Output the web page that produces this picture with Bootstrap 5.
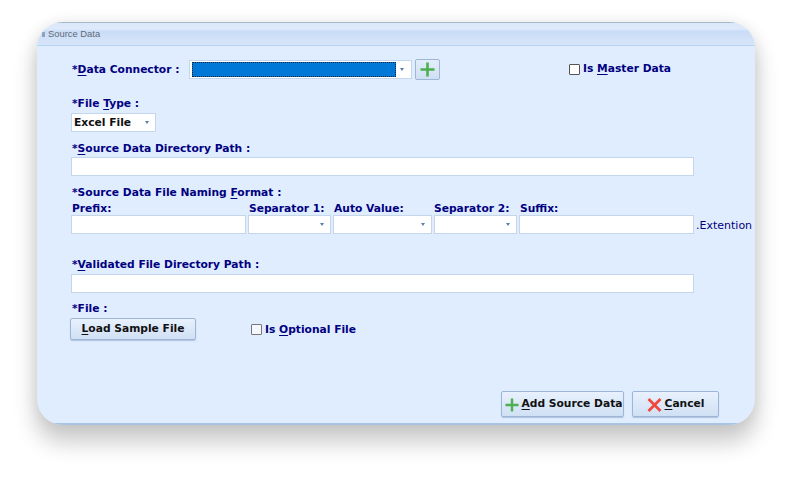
<!DOCTYPE html>
<html lang="en">
<head>
<meta charset="utf-8">
<title>Source Data</title>
<link href="https://cdn.jsdelivr.net/npm/bootstrap@5.3.0/dist/css/bootstrap.min.css" rel="stylesheet">
<style>
html,body{height:100%;background:#fff;margin:0;overflow:hidden}
body{padding:22px 37px 53px;font-family:"DejaVu Sans","Liberation Sans",sans-serif}
.dlg{width:718px;height:403px;border-radius:26px;background:#e0edfe;overflow:hidden;box-shadow:0 16px 22px 2px rgba(0,0,0,.2),0 0 16px rgba(0,0,0,.08);display:flex;flex-direction:column}
.dlg-head{height:24px;flex:none;background:linear-gradient(#dbe8fa 0,#dfebfc 6px,#c9dcf6 8px,#d8e6fa 23px);border-top:1px solid #a9b7c9;border-bottom:1px solid #b6d4f3;color:#5f6a79;padding:4px 0 0 5px;line-height:14px;white-space:nowrap;font-family:"Liberation Sans",sans-serif;font-size:9.4px;display:flex;align-items:flex-start;gap:3px}
.tick{width:3px;height:5px;background:#8ea3bd;margin-top:5px;flex:none}
.dlg-body{flex:1;padding:0 0 0 34px;position:relative;display:flex;flex-direction:column;border-bottom:2px solid #a9c3e2}
.lbl{font-size:10.7px;font-weight:700;color:#000080;line-height:14px;white-space:nowrap;margin:0}
p.lbl,.first{padding-left:1px}
.lbl u{text-underline-offset:2px}
.fld{height:19px;background:#fff;border:1px solid #c4d6ec;display:flex;align-items:center;justify-content:flex-end;flex:none}
.wide{width:623px}
.caret{width:0;height:0;border-left:2.5px solid transparent;border-right:2.5px solid transparent;border-top:3px solid #5b7ea8;margin-right:6px}
.conn{width:223px;padding:1px}
.conn-sel{flex:1;height:15px;background:#0078d7;outline:1px dotted #123;outline-offset:-1px;margin-left:1px;margin-right:4px}
.plus{width:25px;height:21px;padding:0;border:1px solid #9db6d6;border-radius:2px;background:linear-gradient(#e3eefc,#cfdff3);display:flex;align-items:center;justify-content:center;margin-left:3px}
.chk{width:11px;height:11px;border:1px solid #555;background:#fff;border-radius:1px;flex:none}
.chk-soft{border-color:#777;background:#f4f7fb}
.winbtn{height:22px;padding:0;border:1px solid #9db6d6;border-radius:2px;background:linear-gradient(#e8f1fd,#d0e0f4);color:#111;font-size:10.7px;font-weight:700;line-height:1;box-shadow:0 1px 1px rgba(90,120,160,.35);display:flex;align-items:center;justify-content:center;gap:3px;white-space:nowrap}
.winbtn u{text-underline-offset:2px}
.typ{width:85px;font-size:10.7px;font-weight:700;color:#111;justify-content:space-between;padding-left:2px}
.typ span:first-child{padding-top:1px}
.ext{font-size:11px;color:#000080;line-height:14px;white-space:nowrap;margin-top:2px}
.cols{gap:2px}
.c1{width:175px}.c2{width:83px}.c3{width:99px}.c4{width:83px}.c5{width:175px}
.cap{display:block;padding-left:1px}
.cap-sep2{margin-left:-1px;width:84px}
.r1{height:21px;margin-top:13px}
.r2{margin-top:17px}
.r3{margin-top:2px}
.r4{margin-top:10px}
.r5{margin-top:1px}
.r6{margin-top:10px}
.r7{margin-top:2px;height:14px}
.r8{margin-top:-1px}
.r9{margin-top:24px}
.r10{margin-top:2px}
.r11{margin-top:9px}
.r12{margin-top:2px}
.chkm{position:absolute;left:532px;top:16px;gap:3px}
.optl{margin-left:55px;margin-top:1px;gap:3px}
.foot{position:absolute;left:464px;top:345px;gap:8px}
.b-add{width:123px;height:26px;padding-left:2px;padding-top:1px}
.b-can{width:87px;height:26px;padding-top:1px}
</style>
</head>
<body>
<div class="dlg">
  <div class="dlg-head"><span class="tick"></span><span>Source Data</span></div>
  <div class="dlg-body">
    <div class="d-flex align-items-center r1">
      <span class="lbl first" style="width:118px">*<u>D</u>ata Connector :</span>
      <div class="fld conn"><div class="conn-sel"></div><span class="caret"></span></div>
      <button type="button" class="plus" aria-label="Add connector">
        <svg width="15" height="15" viewBox="0 0 15 15"><path d="M6.2 0.5h2.6v5.7h5.7v2.6H8.8v5.7H6.2V8.8H0.5V6.2h5.7z" fill="#4caf50"/></svg>
      </button>
    </div>
    <div class="d-flex align-items-center chkm">
      <span class="chk"></span><span class="lbl">Is <u>M</u>aster Data</span>
    </div>
    <p class="lbl r2">*File <u>T</u>ype :</p>
    <div class="fld typ r3"><span>Excel File</span><span class="caret"></span></div>
    <p class="lbl r4">*<u>S</u>ource Data Directory Path :</p>
    <div class="fld wide r5"></div>
    <p class="lbl r6">*Source Data File Naming <u>F</u>ormat :</p>
    <div class="d-flex cols r7">
      <span class="lbl cap c1">Prefix:</span>
      <span class="lbl cap c2">Separator 1:</span>
      <span class="lbl cap c3">Auto Value:</span>
      <span class="lbl cap cap-sep2">Separator 2:</span>
      <span class="lbl cap c5">Suffix:</span>
    </div>
    <div class="d-flex cols align-items-center r8">
      <div class="fld c1"></div>
      <div class="fld c2"><span class="caret"></span></div>
      <div class="fld c3"><span class="caret"></span></div>
      <div class="fld c4"><span class="caret"></span></div>
      <div class="fld c5"></div>
      <span class="ext">.Extention</span>
    </div>
    <p class="lbl r9">*<u>V</u>alidated File Directory Path :</p>
    <div class="fld wide r10"></div>
    <p class="lbl r11">*File :</p>
    <div class="d-flex align-items-center r12">
      <button type="button" class="winbtn" style="width:126px;margin-left:-1px"><span><u>L</u>oad Sample File</span></button>
      <div class="d-flex align-items-center optl">
        <span class="chk chk-soft"></span><span class="lbl">Is <u>O</u>ptional File</span>
      </div>
    </div>
    <div class="d-flex foot">
      <button type="button" class="winbtn b-add">
        <svg width="14" height="14" viewBox="0 0 15 15"><path d="M6.2 0.5h2.6v5.7h5.7v2.6H8.8v5.7H6.2V8.8H0.5V6.2h5.7z" fill="#4caf50"/></svg>
        <span><u>A</u>dd Source Data</span>
      </button>
      <button type="button" class="winbtn b-can">
        <svg width="15" height="14" viewBox="0 0 15 14"><path d="M1.5 1L13.5 13M13.5 1L1.5 13" stroke="#f0483e" stroke-width="2.8" fill="none"/></svg>
        <span><u>C</u>ancel</span>
      </button>
    </div>
  </div>
</div>
<script src="https://cdn.jsdelivr.net/npm/bootstrap@5.3.0/dist/js/bootstrap.bundle.min.js"></script>
</body>
</html>
